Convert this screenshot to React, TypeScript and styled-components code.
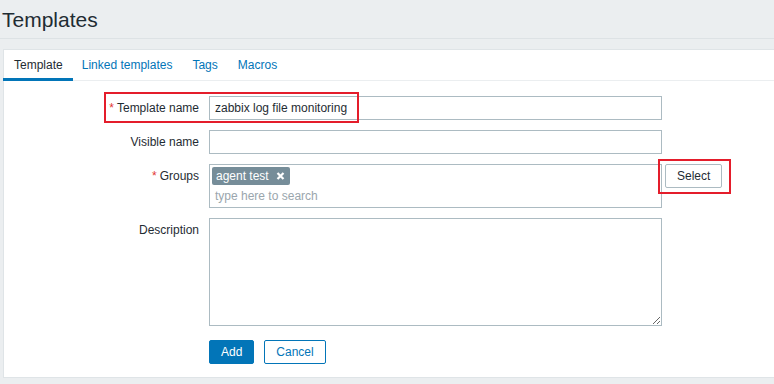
import React from "react";
import styled, { createGlobalStyle } from "styled-components";

const GlobalStyle = createGlobalStyle`
  html, body {
    margin: 0;
    padding: 0;
    background: #ebeef0;
    overflow: hidden;
  }
  body {
    font-family: "Liberation Sans", Arial, sans-serif;
    font-size: 12px;
    color: #1f2c33;
  }
`;

const Page = styled.div`
  padding-left: 3px;
  height: 384px;
  box-sizing: border-box;
`;

const Header = styled.header`
  height: 38px;
  display: flex;
  align-items: center;
  border-bottom: 1px solid #dde2e5;
  margin-right: -3px;
  margin-left: -3px;
  padding-left: 2px;
`;

const Title = styled.h1`
  margin: 0;
  font-size: 21px;
  font-weight: normal;
  color: #1f2c33;
  position: relative;
  top: 1px;
`;

const Panel = styled.main`
  margin-top: 10px;
  background: #fff;
  border: 1px solid #dfe4e7;
  border-right: none;
  height: 329px;
  box-sizing: border-box;
`;

const Tabs = styled.nav`
  display: flex;
  height: 30px;
  margin-left: -1px;
  border-bottom: 1px solid #ebeef0;
`;

const Tab = styled.a<{ $active?: boolean }>`
  display: flex;
  align-items: center;
  padding: 2px 10px 0 ${({ $active }) => ($active ? "11px" : "10px")};
  margin-right: ${({ $active }) => ($active ? "-1px" : "0")};
  color: ${({ $active }) => ($active ? "#1f2c33" : "#0275b8")};
  border-bottom: 3px solid ${({ $active }) => ($active ? "#0275b8" : "transparent")};
  margin-bottom: -1px;
  text-decoration: none;
  cursor: pointer;
`;

const Form = styled.form`
  display: flex;
  flex-direction: column;
  gap: 10px;
  padding: 15px 0 0 10px;
`;

const Row = styled.div`
  position: relative;
  display: flex;
  align-items: flex-start;
  gap: 10px;
`;

const Label = styled.label`
  width: 185px;
  flex: none;
  text-align: right;
  line-height: 14px;
  padding-top: 5px;
`;

const Required = styled.span`
  color: #e33734;
  margin-right: 3px;
`;

const TextInput = styled.input`
  width: 453px;
  height: 24px;
  box-sizing: border-box;
  border: 1px solid #acbbc2;
  padding: 0 5px;
  font-family: inherit;
  font-size: 12px;
  color: #1f2c33;
  outline: none;
`;

const MultiSelect = styled.div`
  width: 453px;
  height: 44px;
  box-sizing: border-box;
  border: 1px solid #acbbc2;
  padding: 2px 2px 0;
  display: flex;
  flex-direction: column;
  align-items: flex-start;
`;

const Chip = styled.span`
  display: inline-flex;
  align-items: center;
  gap: 7px;
  height: 18px;
  padding: 0 5px 0 4px;
  background: #768d99;
  color: #fff;
  border-radius: 2px;
  font-size: 12px;
`;

const Placeholder = styled.span`
  color: #9aa6ad;
  padding: 4px 0 0 3px;
`;

const TextArea = styled.textarea`
  width: 453px;
  height: 108px;
  box-sizing: border-box;
  border: 1px solid #acbbc2;
  font-family: inherit;
  font-size: 12px;
  resize: both;
  outline: none;
`;

const Side = styled.span`
  position: relative;
  margin-left: -7px;
`;

const Button = styled.button<{ $variant: "primary" | "outline" | "plain" }>`
  height: 24px;
  box-sizing: border-box;
  padding: 0 11px;
  border-radius: 2px;
  font-family: inherit;
  font-size: 12px;
  cursor: pointer;
  background: ${({ $variant }) => ($variant === "primary" ? "#0275b8" : "#fff")};
  color: ${({ $variant }) =>
    $variant === "primary" ? "#fff" : $variant === "outline" ? "#0275b8" : "#1f2c33"};
  border: 1px solid
    ${({ $variant }) => ($variant === "plain" ? "#acbbc2" : "#0275b8")};
`;

const Actions = styled.div`
  display: flex;
  gap: 10px;
  margin-left: 195px;
  margin-top: 4px;
`;

const Highlight = styled.span<{ $l: number; $t: number; $w: number; $h: number }>`
  position: absolute;
  left: ${({ $l }) => $l}px;
  top: ${({ $t }) => $t}px;
  width: ${({ $w }) => $w}px;
  height: ${({ $h }) => $h}px;
  border: 2px solid #e41d2b;
  box-sizing: border-box;
  pointer-events: none;
`;

const CloseIcon = () => (
  <svg width="9" height="8" viewBox="0 0 9 8">
    <path d="M1.5 1 L7.5 7 M7.5 1 L1.5 7" stroke="#fff" strokeWidth="2.2" />
  </svg>
);

export default function App() {
  return (
    <Page>
      <GlobalStyle />
      <Header>
        <Title>Templates</Title>
      </Header>
      <Panel>
        <Tabs>
          <Tab $active>Template</Tab>
          <Tab>Linked templates</Tab>
          <Tab>Tags</Tab>
          <Tab>Macros</Tab>
        </Tabs>
        <Form>
          <Row>
            <Label>
              <Required>*</Required>Template name
            </Label>
            <TextInput defaultValue="zabbix log file monitoring" />
            <Highlight $l={90} $t={-4} $w={255} $h={31} />
          </Row>
          <Row>
            <Label>Visible name</Label>
            <TextInput />
          </Row>
          <Row>
            <Label>
              <Required>*</Required>Groups
            </Label>
            <MultiSelect>
              <Chip>
                agent test
                <CloseIcon />
              </Chip>
              <Placeholder>type here to search</Placeholder>
            </MultiSelect>
            <Side>
              <Button $variant="plain" type="button">
                Select
              </Button>
              <Highlight $l={-7} $t={-5} $w={73} $h={35} />
            </Side>
          </Row>
          <Row>
            <Label>Description</Label>
            <TextArea />
          </Row>
          <Actions>
            <Button $variant="primary" type="button">
              Add
            </Button>
            <Button $variant="outline" type="button">
              Cancel
            </Button>
          </Actions>
        </Form>
      </Panel>
    </Page>
  );
}
